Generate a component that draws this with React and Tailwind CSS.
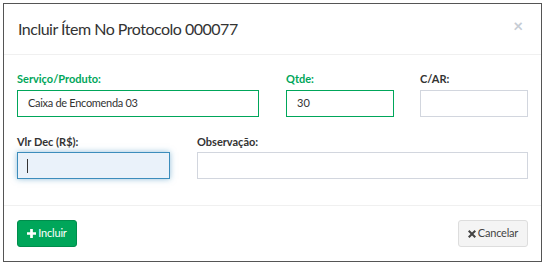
export default function App() {
  const font = { fontFamily: "Lato, 'Open Sans', 'Liberation Sans', sans-serif" };

  return (
    <div className="w-[545px] h-[265px] bg-white p-[3px]" style={font}>
      <div className="w-[539px] h-[259px] border border-[#555] bg-white flex flex-col">
        {/* Header */}
        <div className="h-[51px] border-b border-[#f0f0f0] flex items-center justify-between pl-[14px] pr-[18px]">
          <h4 className="text-[16px] tracking-[-0.5px] text-[#333] leading-none">Incluir Ítem No Protocolo 000077</h4>
          <span className="text-[17px] font-bold text-[#c6ccd4] leading-none -mt-[8px]">×</span>
        </div>

        {/* Body */}
        <div className="h-[151px] border-b border-[#f0f0f0] pl-[13px] pt-[15px]">
          <div className="flex">
            <div className="w-[242px]">
              <label className="block h-[17px] leading-[17px] mb-[3px] text-[11px] font-bold text-[#00a65a]">Serviço/Produto:</label>
              <div className="h-[27px] border border-[#00a65a] flex items-center px-[10px] text-[11px] tracking-[-0.3px] text-[#333]">
                Caixa de Encomenda 03
              </div>
            </div>
            <div className="w-[108px] ml-[27px]">
              <label className="block h-[17px] leading-[17px] mb-[3px] text-[11px] font-bold text-[#00a65a]">Qtde:</label>
              <div className="h-[27px] border border-[#00a65a] flex items-center px-[10px] text-[11px] text-[#333]">30</div>
            </div>
            <div className="w-[108px] ml-[26px]">
              <label className="block h-[17px] leading-[17px] mb-[3px] text-[11px] font-bold text-[#333]">C/AR:</label>
              <div className="h-[27px] border border-[#d2d6de]" />
            </div>
          </div>

          <div className="flex mt-[16px]">
            <div className="w-[153px]">
              <label className="block h-[17px] leading-[17px] mb-[2px] text-[11px] font-bold text-[#333]">Vlr Dec (R$):</label>
              <div className="h-[27px] border border-[#3c8dbc] bg-[#eaf2fa] shadow-[0_0_6px_rgba(60,141,188,0.55)] flex items-center px-[9px]">
                <span className="block w-px h-[14px] bg-[#333]" />
              </div>
            </div>
            <div className="w-[331px] ml-[27px]">
              <label className="block h-[17px] leading-[17px] mb-[2px] text-[11px] font-bold text-[#333]">Observação:</label>
              <div className="h-[27px] border border-[#d2d6de]" />
            </div>
          </div>
        </div>

        {/* Footer */}
        <div className="flex-1 flex items-center justify-between pl-[13px] pr-[13px]">
          <button className="h-[27px] w-[60px] rounded-[3px] bg-[#00a65a] border border-[#008d4c] text-white text-[11px] tracking-[-0.2px] flex items-center justify-center gap-[2px]">
            <svg width="9" height="9" viewBox="0 0 10 10" fill="currentColor">
              <path d="M3.5 0h3v3.5H10v3H6.5V10h-3V6.5H0v-3h3.5z" />
            </svg>
            Incluir
          </button>
          <button className="h-[27px] w-[70px] rounded-[3px] bg-[#f4f4f4] border border-[#ddd] text-[#444] text-[11px] tracking-[-0.2px] flex items-center justify-center gap-[2px]">
            <svg width="8" height="8" viewBox="0 0 10 10" fill="currentColor">
              <path d="M1.8 0L5 3.2 8.2 0 10 1.8 6.8 5 10 8.2 8.2 10 5 6.8 1.8 10 0 8.2 3.2 5 0 1.8z" />
            </svg>
            Cancelar
          </button>
        </div>
      </div>
    </div>
  );
}
